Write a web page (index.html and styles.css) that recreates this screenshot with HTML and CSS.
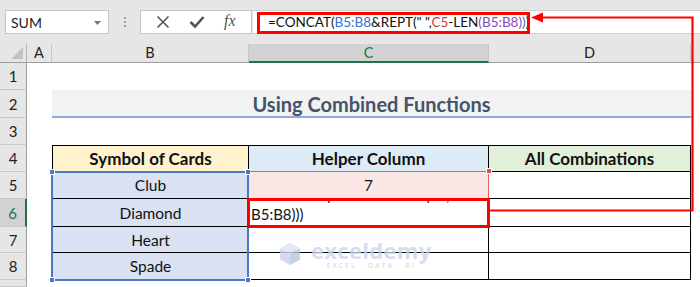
FILE: index.html
```html
<!DOCTYPE html>
<html>
<head>
<meta charset="utf-8">
<link rel="stylesheet" href="styles.css">
</head>
<body>
<div class="app">
  <div class="toolbar">
    <div class="namebox">
      <span class="nb-text">SUM</span>
      <svg class="nb-arrow" width="7" height="4" viewBox="0 0 7 4"><path d="M0 0 L7 0 L3.5 4 Z" fill="#777"/></svg>
    </div>
    <div class="grip"><i></i><i></i><i></i></div>
    <div class="btns">
      <svg class="ico" width="14" height="14" viewBox="0 0 14 14"><path d="M1.5 1.5 L12.5 12.5 M12.5 1.5 L1.5 12.5" stroke="#555" stroke-width="1.6" fill="none"/></svg>
      <svg class="ico" width="16" height="14" viewBox="0 0 16 14"><path d="M1.5 7 L6 11.5 L14.5 2" stroke="#555" stroke-width="2.6" fill="none"/></svg>
      <span class="fx">fx</span>
    </div>
    <div class="fbar">
      <span class="formula">=CONCAT(<span class="r1">B5:B8</span>&amp;REPT(" ",<span class="r2">C5</span>-LEN<span class="r3">(B5:B8)</span><span class="r4">)</span>)</span>
    </div>
  </div>

  <div class="sheet-wrap">
    <div class="sheet">
      <!-- header row -->
      <div class="corner"><span class="tri"></span></div>
      <div class="ch">A</div>
      <div class="ch">B</div>
      <div class="ch sel">C</div>
      <div class="ch">D</div>
      <div class="ch last"></div>

      <!-- row 1 -->
      <div class="rh">1</div><div class="c"></div><div class="c"></div><div class="c"></div><div class="c"></div><div class="c"></div>
      <!-- row 2 -->
      <div class="rh">2</div><div class="c"></div>
      <div class="title">Using Combined Functions</div>
      <div class="c"></div>
      <!-- row 3 -->
      <div class="rh">3</div><div class="c"></div><div class="c"></div><div class="c"></div><div class="c"></div><div class="c"></div>
      <!-- row 4 -->
      <div class="rh">4</div><div class="c"></div>
      <div class="t b h yel">Symbol of Cards</div>
      <div class="t h blu">Helper Column</div>
      <div class="t h grn">All Combinations</div>
      <div class="c"></div>
      <!-- row 5 -->
      <div class="rh">5</div><div class="c"></div>
      <div class="t b sb">Club</div>
      <div class="t pink">7</div>
      <div class="t"></div>
      <div class="c"></div>
      <!-- row 6 -->
      <div class="rh sel">6</div><div class="c"></div>
      <div class="t b sb">Diamond</div>
      <div class="t edit"><div class="edit-text"><span class="l1">=CONCAT(B5:B8&amp;REPT(" ",C5-LEN(</span><span class="l2">B5:B8)))</span></div></div>
      <div class="t"></div>
      <div class="c"></div>
      <!-- row 7 -->
      <div class="rh">7</div><div class="c"></div>
      <div class="t b sb">Heart</div>
      <div class="t"></div>
      <div class="t"></div>
      <div class="c"></div>
      <!-- row 8 -->
      <div class="rh">8</div><div class="c"></div>
      <div class="t b sb">Spade</div>
      <div class="t"></div>
      <div class="t"></div>
      <div class="c"></div>
      <!-- row 9 -->
      <div class="rh"></div><div class="c"></div><div class="c"></div><div class="c"></div><div class="c"></div><div class="c"></div>
    </div>

    <div class="sheet overlay">
      <div class="selB"><i class="hd tl"></i><i class="hd tr"></i><i class="hd bl"></i><i class="hd br"></i></div>
      <div class="selC"><i class="hdr"></i></div>
    </div>
  </div>

  <div class="watermark">
    <svg width="24" height="24" viewBox="0 0 24 24">
      <path d="M12 1 L22 6.5 L22 17.5 L12 23 L2 17.5 L2 6.5 Z" fill="#c9d3e8"/>
      <path d="M12 1 L22 6.5 L12 12 L2 6.5 Z" fill="#dde4f1"/>
      <path d="M12 12 L22 6.5 L22 17.5 L12 23 Z" fill="#b9c6e0"/>
    </svg>
    <div class="wm-text">
      <span class="wm-big">exceldemy</span>
      <span class="wm-small">EXCEL · DATA · BI</span>
    </div>
  </div>

  <svg class="annot" width="700" height="287" viewBox="0 0 700 287">
    <rect x="258.5" y="13.5" width="270" height="19" fill="none" stroke="#f00" stroke-width="3"/>
    <path d="M541 17.5 L692.5 17.5 L692.5 210.5 L490 210.5" fill="none" stroke="#f00" stroke-width="2.2"/>
    <path d="M531 17.5 L543 12.5 L543 22.5 Z" fill="#f00"/>
    <rect x="248.5" y="199.5" width="240" height="27" fill="none" stroke="#f00" stroke-width="3"/>
  </svg>
</div>
</body>
</html>
```

FILE: styles.css
```css
* { box-sizing: border-box; }
html, body { margin: 0; padding: 0; }
body { width: 700px; height: 287px; overflow: hidden; background: #fff; font-family: "Lato", "Open Sans", sans-serif; color: #111; }

.app { position: relative; width: 700px; height: 287px; }

.toolbar { height: 44px; background: #e6e6e6; display: flex; align-items: flex-start; padding-top: 10px; }
.namebox { margin-left: 5px; width: 104px; height: 24px; background: #fff; border: 1px solid #c6c6c6; display: flex; align-items: center; justify-content: space-between; padding: 0 7px 0 5px; }
.nb-text { font-size: 14px; color: #222; }
.nb-arrow { margin-top: 1px; }
.grip { width: 31px; height: 24px; display: flex; flex-direction: column; align-items: center; justify-content: center; gap: 2px; }
.grip i { width: 2px; height: 2px; background: #a0a0a0; display: block; }
.btns { width: 112px; height: 24px; background: #fff; border: 1px solid #c6c6c6; display: flex; align-items: center; justify-content: space-around; padding: 0 6px 0 6px; }
.fx { font-family: "Liberation Serif", serif; font-style: italic; font-size: 16px; color: #555; margin-top: -2px; }
.fbar { margin-left: 1px; flex: 1; height: 24px; background: #fff; border-top: 1px solid #d0d0d0; border-bottom: 1px solid #d0d0d0; padding-left: 15px; display: flex; align-items: center; }
.formula { font-size: 13.5px; color: #111; white-space: nowrap; }
.r1 { color: #3a6fd0; }
.r2 { color: #d03a3a; }
.r3 { color: #8a4bb8; }
.r4 { color: #3a6fd0; }

.sheet-wrap { position: relative; }
.sheet { display: grid; grid-template-columns: 27px 25px 197px 240px 202px 9px; grid-template-rows: 19px 27px 28px 27px 27px 27px 28px 26px 27px 7px; background: #fff; }
.overlay { position: absolute; left: 0; top: 0; background: transparent; pointer-events: none; }

.corner { background: #e6e6e6; border-right: 1px solid #b5b5b5; border-bottom: 1px solid #9e9e9e; position: relative; }
.tri { position: absolute; right: 3px; bottom: 3px; width: 12px; height: 12px; background: #c3c3c3; clip-path: polygon(100% 0, 100% 100%, 0 100%); }
.ch { background: #e6e6e6; border-right: 1px solid #c6c6c6; border-bottom: 1px solid #9e9e9e; font-size: 14.5px; text-align: center; line-height: 18px; color: #222; }
.ch.sel { background: #d2d2d2; color: #217346; border-bottom: 2px solid #217346; }
.ch.last { border-right: none; }

.rh { background: #e6e6e6; border-bottom: 1px solid #c8c8c8; border-right: 1px solid #9e9e9e; font-size: 15px; color: #222; display: flex; align-items: center; justify-content: center; }
.rh.sel { background: #d2d2d2; color: #217346; border-right: 2px solid #217346; }

.c { background: #fff; }

.title { grid-column: 3 / 6; background: #f2f2f2; border-bottom: 2px solid #8eaadb; display: flex; align-items: center; justify-content: center; font-weight: bold; font-size: 20px; color: #44546a; padding-top: 1px; }

.t { border-right: 1px solid #000; border-bottom: 1px solid #000; display: flex; align-items: center; justify-content: center; font-size: 15.5px; color: #111; background: #fff; }
.t.b { border-left: 1px solid #000; }
.t.h { border-top: 1px solid #000; font-weight: bold; font-size: 17px; }
.yel { background: #fff2cc; }
.blu { background: #ddebf7; }
.grn { background: #e2efda; }
.sb { background: #d9e1f2; }
.pink { background: #fbe6e6; }

.edit { overflow: hidden; align-items: flex-end; justify-content: flex-start; border-bottom: 2px solid #217346; }
.edit-text { font-size: 15px; line-height: 19px; white-space: nowrap; padding: 0 0 1px 2px; display: flex; flex-direction: column; }
.l1 { display: block; letter-spacing: 0.75px; }
.l2 { display: block; }

.selB { grid-column: 3; grid-row: 6 / 10; border: 2px solid #4a78c8; margin: -1px 0 -1px -1px; position: relative; }
.hd { position: absolute; width: 6px; height: 6px; background: #4a78c8; border: 1px solid #fff; }
.hd.tl { left: -4px; top: -4px; }
.hd.tr { right: -4px; top: -4px; }
.hd.bl { left: -4px; bottom: -4px; }
.hd.br { right: -4px; bottom: -4px; }

.selC { grid-column: 4; grid-row: 6; border-top: 1px solid #e06060; border-right: 1px solid #e06060; margin: -1px 0 0 0; position: relative; }
.hdr { position: absolute; right: -4px; top: -4px; width: 6px; height: 6px; background: #d85050; border: 1px solid #fff; }

.watermark { position: absolute; left: 278px; top: 239px; display: flex; align-items: center; gap: 9px; opacity: 0.8; pointer-events: none; }
.wm-text { display: flex; flex-direction: column; align-items: center; line-height: 1; }
.wm-big { font-family: "Open Sans", sans-serif; font-weight: bold; font-size: 22px; color: #cbd5ea; letter-spacing: 0.3px; }
.wm-small { font-family: "Open Sans", sans-serif; font-size: 7px; color: #c8c8c8; letter-spacing: 2px; margin-top: 1px; }

.annot { position: absolute; left: 0; top: 0; pointer-events: none; z-index: 5; }
```
